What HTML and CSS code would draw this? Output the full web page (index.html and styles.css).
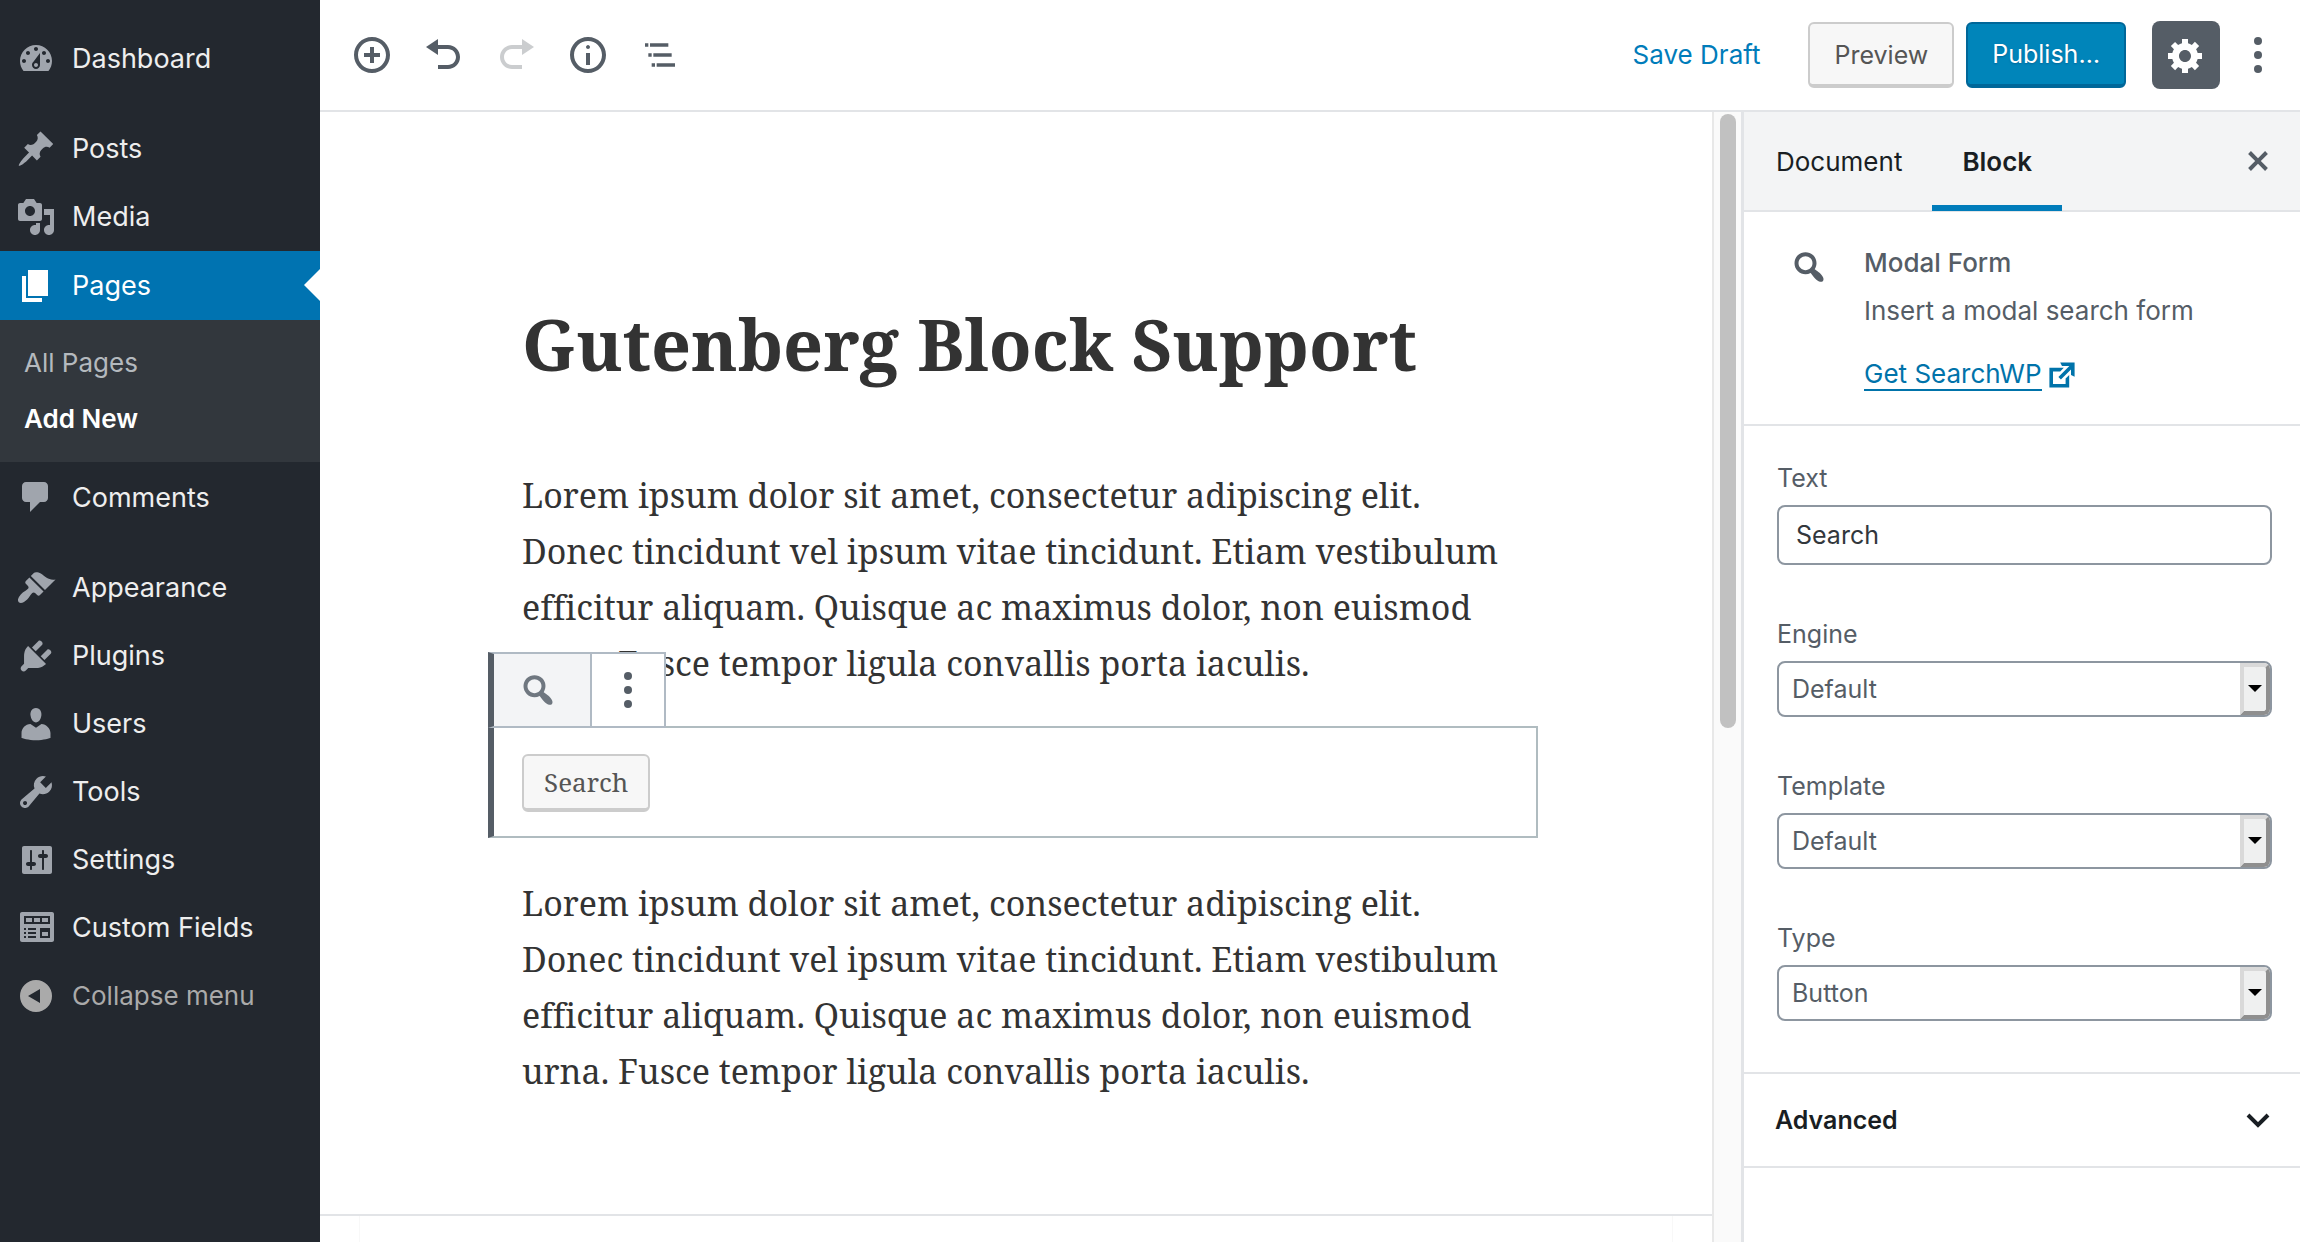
FILE: index.html
```html
<!DOCTYPE html>
<html lang="en">
<head>
<meta charset="utf-8">
<title>Add New Page</title>
<link rel="stylesheet" href="styles.css">
</head>
<body>
<div class="app">
  <nav class="menu" aria-label="Main menu">
    <ul class="menu-list">
      <li><a class="menu-item" href="#"><svg class="icon" viewBox="0 0 20 20"><path d="M3.76 16h12.48c1.1-1.37 1.76-3.11 1.76-5 0-4.42-3.58-8-8-8s-8 3.58-8 8c0 1.89.66 3.63 1.76 5zM10 4c.55 0 1 .45 1 1s-.45 1-1 1-1-.45-1-1 .45-1 1-1zM6 6c.55 0 1 .45 1 1s-.45 1-1 1-1-.45-1-1 .45-1 1-1zm8 0c.55 0 1 .45 1 1s-.45 1-1 1-1-.45-1-1 .45-1 1-1zm-5.37 5.55L12 7v6c0 1.1-.9 2-2 2s-2-.9-2-2c0-.57.24-1.08.63-1.45zM4 10c.55 0 1 .45 1 1s-.45 1-1 1-1-.45-1-1 .45-1 1-1zm12 0c.55 0 1 .45 1 1s-.45 1-1 1-1-.45-1-1 .45-1 1-1zm-5 3c0-.55-.45-1-1-1s-1 .45-1 1 .45 1 1 1 1-.45 1-1z"/></svg>Dashboard</a></li>
      <li class="separated"><a class="menu-item" href="#"><svg class="icon" viewBox="0 0 20 20"><path d="M10.44 3.02l1.82-1.82 6.36 6.35-1.83 1.82c-1.05-.68-2.48-.57-3.41.36l-.75.75c-.92.93-1.04 2.35-.35 3.41l-1.83 1.82-2.41-2.41-2.8 2.79c-.42.42-3.38 2.71-3.8 2.29s1.86-3.39 2.28-3.81l2.79-2.79L4.1 9.36l1.83-1.82c1.05.69 2.48.57 3.4-.36l.75-.75c.93-.92 1.05-2.35.36-3.41z"/></svg>Posts</a></li>
      <li><a class="menu-item" href="#"><svg class="icon" viewBox="0 0 20 20"><path d="M13 11V4c0-.55-.45-1-1-1h-1.67L9 1H5L3.67 3H2c-.55 0-1 .45-1 1v7c0 .55.45 1 1 1h10c.55 0 1-.45 1-1zM7 4.5c1.38 0 2.5 1.12 2.5 2.5S8.38 9.5 7 9.5 4.5 8.38 4.5 7 5.62 4.5 7 4.5zM14 6h5v10.5c0 1.38-1.12 2.5-2.5 2.5S14 17.88 14 16.5s1.12-2.5 2.5-2.5c.17 0 .34.02.5.05V9h-3V6zm-4 8.05V13h2v3.5c0 1.38-1.12 2.5-2.5 2.5S7 17.88 7 16.5 8.12 14 9.5 14c.17 0 .34.02.5.05z"/></svg>Media</a></li>
      <li>
        <a class="menu-item current" href="#"><svg class="icon" viewBox="0 0 20 20"><path d="M6 15V2h10v13H6zm-1 1h8v2H3V5h2v11z"/></svg>Pages</a>
        <ul class="submenu">
          <li><a href="#">All Pages</a></li>
          <li><a class="current-sub" href="#">Add New</a></li>
        </ul>
      </li>
      <li><a class="menu-item" href="#"><svg class="icon" viewBox="0 0 20 20"><path d="M5 2h9c1.1 0 2 .9 2 2v6c0 1.1-.9 2-2 2h-2l-5 5v-5H5c-1.1 0-2-.9-2-2V4c0-1.1.9-2 2-2z"/></svg>Comments</a></li>
      <li class="separated"><a class="menu-item" href="#"><svg class="icon" viewBox="0 0 20 20"><path d="M14.48 11.06L7.41 3.99l1.5-1.5c.5-.56 2.3-.47 3.51.32 1.21.8 1.43 1.28 2.91 2.1 1.18.64 2.45 1.26 4.45.85zm-.71.71L6.7 4.7 4.93 6.47c-.39.39-.39 1.02 0 1.41l1.06 1.06c.39.39.39 1.03 0 1.42-.6.6-1.43 1.11-2.21 1.69-.35.26-.7.53-1.01.84C1.43 14.23.4 16.08 1.4 17.07c.99 1 2.84-.03 4.18-1.36.31-.31.58-.66.85-1.02.57-.78 1.08-1.61 1.69-2.21.39-.39 1.02-.39 1.41 0l1.06 1.06c.39.39 1.02.39 1.41 0z"/></svg>Appearance</a></li>
      <li><a class="menu-item" href="#"><svg class="icon" viewBox="0 0 20 20"><path d="M13.11 4.36L9.87 7.6 8 5.73l3.24-3.24c.35-.34 1.05-.2 1.56.32.52.51.66 1.21.31 1.55zm-8 1.77l.91-1.12 9.01 9.01-1.19.84c-.71.71-2.63 1.16-3.82 1.16H6.14L4.9 17.26c-.59.59-1.54.59-2.12 0-.59-.58-.59-1.53 0-2.12l1.24-1.24v-3.88c0-1.13.4-3.19 1.09-3.89zm7.26 3.97l3.24-3.24c.34-.35 1.04-.21 1.55.31.52.51.66 1.21.31 1.55l-3.24 3.25z"/></svg>Plugins</a></li>
      <li><a class="menu-item" href="#"><svg class="icon" viewBox="0 0 20 20"><path d="M10 9.25c-2.27 0-2.73-3.44-2.73-3.44C7 4.02 7.82 2 9.97 2c2.16 0 2.98 2.02 2.71 3.81 0 0-.41 3.44-2.68 3.44zm0 2.57L12.72 10c2.39 0 4.52 2.33 4.52 4.53v2.49s-3.65 1.13-7.24 1.13c-3.65 0-7.24-1.13-7.24-1.13v-2.49c0-2.25 1.94-4.48 4.47-4.48z"/></svg>Users</a></li>
      <li><a class="menu-item" href="#"><svg class="icon" viewBox="0 0 20 20"><path d="M16.68 9.77c-1.34 1.34-3.3 1.67-4.95.99l-5.41 6.52c-.99.99-2.59.99-3.58 0s-.99-2.59 0-3.57l6.52-5.42c-.68-1.65-.35-3.61.99-4.95 1.28-1.28 3.12-1.62 4.72-1.06l-2.89 2.89 2.82 2.82 2.86-2.87c.53 1.58.18 3.39-1.08 4.65zM3.81 16.21c.4.39 1.04.39 1.43 0 .4-.4.4-1.04 0-1.43-.39-.4-1.03-.4-1.43 0-.39.39-.39 1.03 0 1.43z"/></svg>Tools</a></li>
      <li><a class="menu-item" href="#"><svg class="icon" viewBox="0 0 20 20"><path d="M18 16V4c0-.55-.45-1-1-1H4c-.55 0-1 .45-1 1v12c0 .55.45 1 1 1h13c.55 0 1-.45 1-1zM8 11h1c.55 0 1 .45 1 1s-.45 1-1 1H8v1.5c0 .28-.22.5-.5.5s-.5-.22-.5-.5V13H6c-.55 0-1-.45-1-1s.45-1 1-1h1V5.500c0-.28.22-.5.5-.5s.5.22.5.5V11zm5-2h-1c-.55 0-1-.45-1-1s.45-1 1-1h1V5.500c0-.28.22-.5.5-.5s.5.22.5.5V7h1c.55 0 1 .45 1 1s-.45 1-1 1h-1v5.500c0 .28-.22.5-.5.5s-.5-.22-.5-.5V9z"/></svg>Settings</a></li>
      <li><a class="menu-item" href="#"><svg class="icon" viewBox="0 0 20 20"><path fill-rule="evenodd" d="M19 16V3c0-.55-.45-1-1-1H3c-.55 0-1 .45-1 1v13c0 .55.45 1 1 1h15c.55 0 1-.45 1-1zM4 4h13v4H4V4zm1 1v2h3V5H5zm4 0v2h3V5H9zm4 0v2h3V5h-3zM4 10h1v1H4v-1zm2 0h4v1H6v-1zm6 0h5v5h-5v-5zm1 2v2h3v-2h-3zm-9 0h1v1H4v-1zm2 0h4v1H6v-1zm-2 2h1v1H4v-1zm2 0h4v1H6v-1z"/></svg>Custom Fields</a></li>
    </ul>
    <button class="menu-item collapse" type="button"><svg class="icon" viewBox="0 0 20 20"><path fill-rule="evenodd" d="M10 2a8 8 0 1 0 0 16 8 8 0 0 0 0-16zM12 6.500v7l-6-3.500z"/></svg>Collapse menu</button>
  </nav>

  <div class="workspace">
    <header class="topbar">
      <div class="tools">
        <button class="tool" type="button" aria-label="Add block"><svg class="icon" viewBox="0 0 20 20"><path d="M10 1c-5 0-9 4-9 9s4 9 9 9 9-4 9-9-4-9-9-9zm0 16c-3.900 0-7-3.100-7-7s3.100-7 7-7 7 3.100 7 7-3.100 7-7 7zm1-11H9v3H6v2h3v3h2v-3h3V9h-3V6z"/></svg></button>
        <button class="tool" type="button" aria-label="Undo"><svg class="icon" viewBox="0 0 20 20"><path d="M12 5H7V2L1 6l6 4V7h5c2.200 0 4 1.800 4 4s-1.800 4-4 4H7v2h5c3.300 0 6-2.700 6-6s-2.700-6-6-6"/></svg></button>
        <button class="tool" type="button" aria-label="Redo" disabled><svg class="icon" viewBox="0 0 20 20"><path d="M8 5h5V2l6 4-6 4V7H8c-2.200 0-4 1.800-4 4s1.800 4 4 4h5v2H8c-3.300 0-6-2.700-6-6s2.700-6 6-6"/></svg></button>
        <button class="tool" type="button" aria-label="Content structure"><svg class="icon" viewBox="0 0 20 20"><path d="M9 15h2V9H9v6zm1-10c-.5 0-1 .5-1 1s.5 1 1 1 1-.5 1-1-.5-1-1-1zm0-4c-5 0-9 4-9 9s4 9 9 9 9-4 9-9-4-9-9-9zm0 16c-3.900 0-7-3.100-7-7s3.100-7 7-7 7 3.100 7 7-3.100 7-7 7z"/></svg></button>
        <button class="tool" type="button" aria-label="Block navigation"><svg class="icon" viewBox="0 0 24 24"><path d="M5 5H3v2h2V5zm12 0H6v2h11V5zM7 11H5v2h2v-2zm1 2h11v-2H8v2zm-1 6h2v-2H7v2zm3-2v2h11v-2H10z"/></svg></button>
      </div>
      <div class="actions">
        <button class="save" type="button">Save Draft</button>
        <button class="btn" type="button">Preview</button>
        <button class="btn primary" type="button">Publish…</button>
        <button class="gear" type="button" aria-label="Settings"><svg class="icon" viewBox="0 0 20 20"><path d="M18 12h-2.180c-.17.7-.44 1.350-.81 1.930l1.540 1.540-2.100 2.100-1.540-1.540c-.58.36-1.230.63-1.910.79V19H8v-2.180c-.68-.16-1.330-.43-1.910-.79l-1.540 1.540-2.120-2.120 1.540-1.540c-.36-.58-.63-1.230-.79-1.910H1V9.030h2.170c.16-.7.44-1.350.8-1.940L2.430 5.550l2.100-2.100 1.540 1.540c.58-.37 1.240-.64 1.930-.81V2h3v2.180c.68.16 1.330.43 1.910.79l1.540-1.540 2.120 2.120-1.540 1.540c.36.59.64 1.240.8 1.940H18V12zm-8.500 1.500c1.660 0 3-1.340 3-3s-1.340-3-3-3-3 1.340-3 3 1.340 3 3 3z"/></svg></button>
        <button class="more" type="button" aria-label="More options"><svg class="icon" viewBox="0 0 20 20"><circle cx="10" cy="3" r="2"/><circle cx="10" cy="10" r="2"/><circle cx="10" cy="17" r="2"/></svg></button>
      </div>
    </header>

    <div class="body">
      <main class="editor">
        <div class="page">
          <h1 class="title">Gutenberg Block Support</h1>
          <p class="para">Lorem ipsum dolor sit amet, consectetur adipiscing elit.<br>Donec tincidunt vel ipsum vitae tincidunt. Etiam vestibulum<br>efficitur aliquam. Quisque ac maximus dolor, non euismod<br>urna. Fusce tempor ligula convallis porta iaculis.</p>
          <section class="block">
            <div class="block-tools">
              <button class="block-type" type="button" aria-label="Modal Form"><svg class="icon" viewBox="0 0 20 20"><path d="M12.140 4.180c1.870 1.870 2.110 4.750.72 6.890.12.1.22.21.36.31.2.16.47.36.81.59.34.24.56.39.66.47.42.31.73.57.94.78.32.32.6.65.84 1 .25.35.44.69.59 1.040.14.35.21.68.18 1-.02.32-.14.59-.36.81s-.49.34-.81.36c-.31.02-.65-.04-.99-.19-.35-.14-.7-.34-1.040-.59-.35-.24-.68-.52-1-.84-.21-.21-.47-.52-.77-.93-.1-.13-.25-.35-.47-.66-.22-.32-.4-.57-.56-.78-.16-.2-.29-.35-.44-.5-2.070 1.090-4.690.76-6.440-.98-2.140-2.150-2.140-5.640 0-7.780 2.150-2.150 5.630-2.150 7.780 0zm-1.410 6.360c1.360-1.370 1.360-3.580 0-4.950-1.370-1.370-3.590-1.370-4.950 0-1.370 1.370-1.370 3.580 0 4.950 1.360 1.370 3.580 1.370 4.950 0z"/></svg></button>
              <button class="block-more" type="button" aria-label="Block options"><svg class="icon" viewBox="0 0 20 20"><circle cx="10" cy="3" r="2"/><circle cx="10" cy="10" r="2"/><circle cx="10" cy="17" r="2"/></svg></button>
            </div>
            <button class="search-btn" type="button">Search</button>
          </section>
          <p class="para">Lorem ipsum dolor sit amet, consectetur adipiscing elit.<br>Donec tincidunt vel ipsum vitae tincidunt. Etiam vestibulum<br>efficitur aliquam. Quisque ac maximus dolor, non euismod<br>urna. Fusce tempor ligula convallis porta iaculis.</p>
        </div>
        <div class="metaboxes"><div class="metabox"></div></div>
      </main>
      <div class="scrollbar"><div class="thumb"></div><div class="track"></div></div>

      <aside class="panel">
        <div class="tabs">
          <button class="tab" type="button">Document</button>
          <button class="tab active" type="button">Block</button>
          <button class="close" type="button" aria-label="Close settings"><svg class="icon" viewBox="0 0 20 20"><path d="M14.950 6.460L11.410 10l3.540 3.540-1.410 1.410L10 11.420l-3.530 3.530-1.420-1.420L8.580 10 5.050 6.470l1.420-1.420L10 8.580l3.540-3.530z"/></svg></button>
        </div>
        <div class="card">
          <svg class="icon" viewBox="0 0 20 20"><path d="M12.140 4.180c1.870 1.870 2.110 4.750.72 6.890.12.1.22.21.36.31.2.16.47.36.81.59.34.24.56.39.66.47.42.31.73.57.94.78.32.32.6.65.84 1 .25.35.44.69.59 1.040.14.35.21.68.18 1-.02.32-.14.59-.36.81s-.49.34-.81.36c-.31.02-.65-.04-.99-.19-.35-.14-.7-.34-1.040-.59-.35-.24-.68-.52-1-.84-.21-.21-.47-.52-.77-.93-.1-.13-.25-.35-.47-.66-.22-.32-.4-.57-.56-.78-.16-.2-.29-.35-.44-.5-2.070 1.090-4.690.76-6.440-.98-2.140-2.150-2.140-5.640 0-7.780 2.150-2.150 5.630-2.150 7.780 0zm-1.410 6.360c1.360-1.370 1.360-3.580 0-4.950-1.370-1.370-3.590-1.370-4.950 0-1.370 1.370-1.370 3.580 0 4.950 1.360 1.370 3.580 1.370 4.950 0z"/></svg>
          <div class="card-text">
            <h2 class="card-title">Modal Form</h2>
            <p class="card-desc">Insert a modal search form</p>
            <a class="card-link" href="#"><span>Get SearchWP</span><svg class="ext" viewBox="0 0 20 20"><path d="M9 3h8v8l-2-1V6.920l-5.600 5.590-1.410-1.410L14.080 5H10zm3 12v-3l2-2v7H3V6h8L9 8H5v7h7z"/></svg></a>
          </div>
        </div>
        <form class="fields">
          <div class="field">
            <label for="text">Text</label>
            <input class="text-input" id="text" type="text" value="Search">
          </div>
          <div class="field">
            <label for="engine">Engine</label>
            <div class="select"><select id="engine"><option>Default</option></select></div>
          </div>
          <div class="field">
            <label for="template">Template</label>
            <div class="select"><select id="template"><option>Default</option></select></div>
          </div>
          <div class="field">
            <label for="type">Type</label>
            <div class="select"><select id="type"><option>Button</option></select></div>
          </div>
        </form>
        <button class="advanced" type="button">Advanced<svg class="icon" viewBox="0 0 20 20"><path d="M5 7.500l5 5 5-5" fill="none" stroke="currentColor" stroke-width="2"/></svg></button>
      </aside>
    </div>
  </div>
</div>
</body>
</html>
```
FILE: styles.css
```css
*, *::before, *::after { box-sizing: border-box; }

body {
  margin: 0;
  font-family: Inter, "Liberation Sans", sans-serif;
  font-size: 26px;
  line-height: 36px;
  color: #191e23;
  background: #fff;
}

ul { list-style: none; margin: 0; padding: 0; }
h1, h2, p { margin: 0; }
a { color: inherit; text-decoration: none; }
button { margin: 0; padding: 0; border: 0; background: none; font: inherit; color: inherit; cursor: pointer; }

.icon { display: block; width: 40px; height: 40px; flex: none; fill: currentColor; }

.app { display: flex; min-height: 100vh; }

/* Admin menu */
.menu { width: 320px; flex: none; padding-top: 25px; background: #23282f; }
.menu-item {
  display: flex;
  align-items: center;
  gap: 16px;
  width: 100%;
  height: 68px;
  padding: 0 0 0 16px;
  color: #eee;
  font-size: 27px;
}
.menu-item .icon { color: #a0a5ad; }
.separated { margin-top: 22px; }
.menu-item.current { position: relative; height: 69px; background: #0073b1; color: #fff; }
.menu-item.current .icon { color: #fff; }
.menu-item.current::after {
  content: "";
  position: absolute;
  right: 0;
  top: 18px;
  border: 16px solid transparent;
  border-left-width: 0;
  border-right-color: #fff;
}
.submenu { margin-bottom: 2px; padding: 15px 24px; background: #32373d; color: #b4b9be; }
.submenu a { display: block; line-height: 56px; }
.submenu .current-sub { color: #fff; font-weight: 600; }
.menu-item.collapse { font-size: 26px; }
.menu-item.collapse, .menu-item.collapse .icon { color: #aaa; }

/* Top bar */
.workspace { flex: 1; min-width: 0; display: flex; flex-direction: column; }
.topbar {
  display: flex;
  justify-content: space-between;
  align-items: center;
  height: 112px;
  padding: 0 22px 0 16px;
  border-bottom: 2px solid #e2e4e7;
}
.tools, .actions { display: flex; align-items: center; }
.tool { display: flex; justify-content: center; width: 72px; color: #555d66; }
.tool:disabled { color: #cbcdcf; }
.save { margin-right: 48px; color: #007cba; }
.btn {
  height: 66px;
  margin-right: 12px;
  padding: 2px 24px 0;
  border: 2px solid #ccc;
  border-bottom-width: 4px;
  border-radius: 6px;
  background: #f7f7f7;
  color: #555;
  font-size: 25px;
}
.btn.primary {
  margin-right: 26px;
  padding: 0 24px;
  border-color: #006799;
  background: #0085ba;
  color: #fff;
  text-shadow: 0 1px 2px #006799;
}
.gear { display: flex; align-items: center; justify-content: center; width: 68px; height: 68px; border-radius: 8px; background: #555d66; color: #fff; }
.more { margin-left: 18px; color: #555d66; }

/* Editor */
.body { flex: 1; display: flex; }
.editor { flex: 1; min-width: 0; display: flex; flex-direction: column; font-family: "Noto Serif", "DejaVu Serif", serif; font-variant-ligatures: none; color: #333; }
.page { flex: 1; width: 100%; max-width: 988px; margin: 0 auto; padding-top: 182px; }
.title { margin-bottom: 73px; font-size: 70px; line-height: 100px; white-space: nowrap; }
.para { font-size: 34px; line-height: 56px; white-space: nowrap; }
.block {
  position: relative;
  margin: 35px -28px 37px -34px;
  padding: 26px 26px 24px 28px;
  border: 2px solid #b0bcc0;
  border-left: 6px solid #555d66;
}
.block-tools {
  position: absolute;
  left: -6px;
  bottom: 100%;
  display: flex;
  height: 76px;
  border: 2px solid #b0bac4;
  border-left: 6px solid #555d66;
  background: #fff;
}
.block-type { width: 98px; padding-left: 24px; border-right: 2px solid #b0bac4; background: #f3f4f6; color: #6f7780; }
.block-more { width: 72px; padding-left: 16px; color: #555d66; }
.search-btn {
  display: block;
  height: 58px;
  padding: 0 20px;
  border: 2px solid #ccc;
  border-bottom-width: 4px;
  border-radius: 6px;
  background: #f7f7f7;
  color: #555;
}
.metaboxes { height: 28px; padding: 0 39px; border-top: 2px solid #e2e4e7; }
.metabox { height: 100%; border: 1px solid #f8f8f8; border-width: 0 1px; }
.scrollbar { display: flex; flex-direction: column; width: 29px; flex: none; padding: 2px 6px; border-left: 2px solid #e8e8e8; background: #fafafa; }
.thumb { flex: 6; width: 16px; border-radius: 8px; background: #c1c1c1; }
.track { flex: 5; }

/* Settings panel */
.panel { width: 559px; flex: none; border-left: 3px solid #e2e4e7; color: #555d66; }
.tabs { display: flex; height: 100px; padding-left: 2px; border-bottom: 2px solid #e2e4e7; background: #f3f4f5; color: #191e23; }
.tab { height: 99px; padding: 6px 30px 0; border-bottom: 6px solid transparent; }
.tab.active { border-color: #007cba; font-weight: 600; }
.close { margin-left: auto; padding-right: 22px; color: #555d66; }
.card { display: flex; gap: 35px; padding: 33px 24px 31px 45px; border-bottom: 2px solid #e2e4e7; }
.card .icon { margin-top: 2px; }
.card-title { font-size: 26px; line-height: 36px; font-weight: 500; }
.card-desc { margin-top: 12px; }
.card-link { display: flex; align-items: center; gap: 2px; margin-top: 28px; color: #0073aa; }
.card-link span { line-height: 30px; border-bottom: 2px solid; }
.ext { width: 36px; height: 36px; fill: currentColor; }
.fields { display: flex; flex-direction: column; gap: 51px; padding: 34px 28px 51px 33px; font-size: 25px; }
.field { display: flex; flex-direction: column; gap: 9px; }
.text-input, .select select {
  width: 100%;
  border: 2px solid #8d96a0;
  border-radius: 8px;
  background: #fff;
  font: inherit;
}
.text-input { height: 60px; padding: 0 17px; color: #32373c; }
.select { position: relative; }
.select select { display: block; height: 56px; padding: 0 13px; appearance: none; color: #555d66; }
.select::before {
  content: "";
  position: absolute;
  right: 2px;
  top: 2px;
  bottom: 2px;
  width: 30px;
  border: 4px solid;
  border-color: #d9d9d9 #8f8f8f #8f8f8f #d9d9d9;
  border-radius: 0 6px 6px 0;
  background: #eff0f0;
  pointer-events: none;
}
.select::after {
  content: "";
  position: absolute;
  right: 10px;
  top: 24px;
  border: 7px solid transparent;
  border-top-color: #000;
  border-bottom: 0;
  pointer-events: none;
}
.advanced {
  display: flex;
  align-items: center;
  justify-content: space-between;
  width: 100%;
  height: 96px;
  padding: 0 22px 0 31px;
  border-top: 2px solid #e2e4e7;
  border-bottom: 2px solid #e2e4e7;
  color: #191e23;
  font-size: 25px;
  font-weight: 600;
}
```
